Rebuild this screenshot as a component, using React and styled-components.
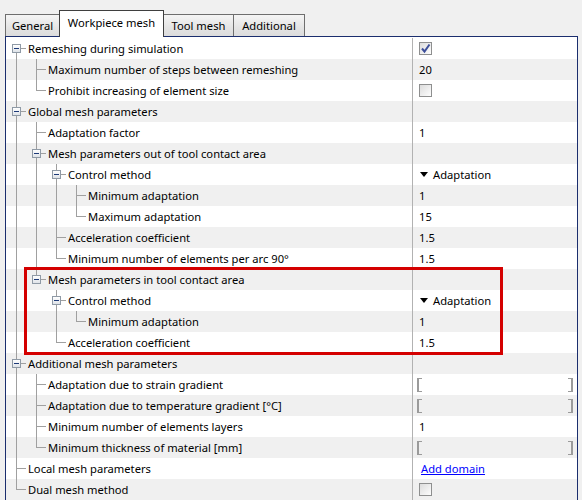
import React from "react";
import styled, { createGlobalStyle } from "styled-components";

const GlobalStyle = createGlobalStyle`
  html, body { margin: 0; padding: 0; background: #f0f0f0; }
  body {
    font-family: "Segoe UI", "Noto Sans", sans-serif;
    font-size: 11.2px;
    color: #000;
  }
`;

const LINE = "#a0a0a0";

const rows = [
  { l: 0, name: "Remeshing during simulation", exp: true, v: { t: "check", on: true } },
  { l: 1, name: "Maximum number of steps between remeshing", v: { t: "text", s: "20" } },
  { l: 1, name: "Prohibit increasing of element size", v: { t: "check" } },
  { l: 0, name: "Global mesh parameters", exp: true },
  { l: 1, name: "Adaptation factor", v: { t: "text", s: "1" } },
  { l: 1, name: "Mesh parameters out of tool contact area", exp: true },
  { l: 2, name: "Control method", exp: true, v: { t: "drop", s: "Adaptation" } },
  { l: 3, name: "Minimum adaptation", v: { t: "text", s: "1" } },
  { l: 3, name: "Maximum adaptation", v: { t: "text", s: "15" } },
  { l: 2, name: "Acceleration coefficient", v: { t: "text", s: "1.5" } },
  { l: 2, name: "Minimum number of elements per arc 90°", v: { t: "text", s: "1.5" } },
  { l: 1, name: "Mesh parameters in tool contact area", exp: true },
  { l: 2, name: "Control method", exp: true, v: { t: "drop", s: "Adaptation" } },
  { l: 3, name: "Minimum adaptation", v: { t: "text", s: "1" } },
  { l: 2, name: "Acceleration coefficient", v: { t: "text", s: "1.5" } },
  { l: 0, name: "Additional mesh parameters", exp: true },
  { l: 1, name: "Adaptation due to strain gradient", v: { t: "field" } },
  { l: 1, name: "Adaptation due to temperature gradient [°C]", v: { t: "field" } },
  { l: 1, name: "Minimum number of elements layers", v: { t: "text", s: "1" } },
  { l: 1, name: "Minimum thickness of material [mm]", v: { t: "field" } },
  { l: 0, name: "Local mesh parameters", v: { t: "link", s: "Add domain" } },
  { l: 0, name: "Dual mesh method", v: { t: "check" } },
];

// is there a later sibling at the same level (before the parent closes)?
const hasNext = (i) => {
  const l = rows[i].l;
  for (let j = i + 1; j < rows.length; j++) {
    if (rows[j].l < l) return false;
    if (rows[j].l === l) return true;
  }
  return false;
};

const guidesFor = (i) => {
  const row = rows[i];
  const out = [];
  for (let l = 0; l < row.l; l++) {
    let a = i - 1;
    while (rows[a].l !== l) a--;
    out.push(hasNext(a) ? ["through"] : []);
  }
  const own = ["horiz"];
  if (i > 0) own.push("up");
  if (hasNext(i)) own.push("down");
  out.push(own);
  return out;
};

const lineBg = {
  through: `linear-gradient(${LINE}, ${LINE}) 10px 0 / 1px 100% no-repeat`,
  up: `linear-gradient(${LINE}, ${LINE}) 10px 0 / 1px 11px no-repeat`,
  down: `linear-gradient(${LINE}, ${LINE}) 10px 10px / 1px 11px no-repeat`,
  horiz: `linear-gradient(${LINE}, ${LINE}) 10px 10px / 10px 1px no-repeat`,
};

const Page = styled.div`
  padding-top: 10px;
  width: 582px;
  height: 500px;
  overflow: hidden;
  box-sizing: border-box;
`;

const TabStrip = styled.div`
  display: flex;
  align-items: flex-end;
  height: 26px;
  padding-left: 5px;
`;

const Tab = styled.div`
  box-sizing: border-box;
  width: ${(p) => p.$w}px;
  height: ${(p) => (p.$active ? 27 : 22)}px;
  margin-left: ${(p) => (p.$first ? 0 : -1)}px;
  margin-bottom: ${(p) => (p.$active ? -1 : 0)}px;
  border: 1px solid ${(p) => (p.$active ? "#3f3f3f" : "#6e6e6e")};
  border-bottom: none;
  background: ${(p) =>
    p.$active ? "#fff" : "linear-gradient(#f5f5f5, #e4e4e4 60%, #dcdcdc)"};
  display: flex;
  align-items: center;
  justify-content: center;
  padding-bottom: ${(p) => (p.$active ? 3 : 0)}px;
  position: relative;
  z-index: ${(p) => (p.$active ? 2 : 1)};
  white-space: nowrap;
`;

const Panel = styled.div`
  margin: 0 4px 0 5px;
  border: 1px solid #1b2e6e;
  border-bottom: none;
  background: #fff;
  padding-top: 1px;
  position: relative;
`;

const Table = styled.div`
  position: relative;
`;

const Row = styled.div`
  display: grid;
  grid-template-columns: 407px 1fr;
  height: 21px;
  background: ${(p) => (p.$alt ? "#f0f0f0" : "#fff")};
`;

const NameCell = styled.div`
  display: flex;
  align-items: center;
  border-right: 1px solid #b2b2b2;
  overflow: hidden;
  white-space: nowrap;
`;

const Slot = styled.div`
  flex: none;
  width: 20px;
  height: 21px;
  display: flex;
  align-items: center;
  padding-left: 6px;
  box-sizing: border-box;
  background: ${(p) => p.$lines.map((k) => lineBg[k]).join(", ") || "none"};
`;

const Expander = styled.div`
  box-sizing: border-box;
  width: 9px;
  height: 9px;
  border: 1px solid #8f9aa6;
  background:
    linear-gradient(#1d3a78, #1d3a78) 1px 3px / 5px 1px no-repeat,
    linear-gradient(#ffffff, #dfe3e8);
`;

const Label = styled.span`
  padding-left: 2px;
`;

const ValueCell = styled.div`
  display: flex;
  align-items: center;
  padding-left: 6px;
  overflow: hidden;
  white-space: nowrap;
`;

const CheckBox = styled.div`
  box-sizing: border-box;
  width: 13px;
  height: 13px;
  border: 1px solid #8e8f8f;
  background: linear-gradient(135deg, #dcdcdc, #fdfdfd);
  display: flex;
  align-items: center;
  justify-content: center;
`;

const Drop = styled.span`
  display: flex;
  align-items: center;
  gap: 5px;
`;

const Arrow = styled.span`
  width: 0;
  height: 0;
  border-left: 4px solid transparent;
  border-right: 4px solid transparent;
  border-top: 5px solid #000;
  margin-left: 1px;
`;

const Field = styled.div`
  box-sizing: border-box;
  margin-left: -2px;
  width: 156px;
  height: 14px;
  border-left: 2px solid #9b9b9b;
  border-right: 2px solid #9b9b9b;
  background:
    linear-gradient(#9b9b9b, #9b9b9b) 0 0 / 3px 1px no-repeat,
    linear-gradient(#9b9b9b, #9b9b9b) 0 100% / 3px 1px no-repeat,
    linear-gradient(#9b9b9b, #9b9b9b) 100% 0 / 3px 1px no-repeat,
    linear-gradient(#9b9b9b, #9b9b9b) 100% 100% / 3px 1px no-repeat;
`;

const Link = styled.a`
  color: #0000ff;
  text-decoration: underline;
  margin-left: 2px;
  cursor: pointer;
`;

const Highlight = styled.div`
  position: absolute;
  left: 18px;
  top: 229px;
  width: 479px;
  height: 88px;
  border: 3px solid #d40000;
  box-sizing: border-box;
  pointer-events: none;
`;

const Check = () => (
  <svg width="11" height="11" viewBox="0 0 11 11">
    <path d="M2 5.5 L4.5 8.5 L9.5 1.5" fill="none" stroke="#3d4f9a" strokeWidth="2" />
  </svg>
);

const Value = ({ v }) => {
  if (!v) return null;
  if (v.t === "check") return <CheckBox>{v.on && <Check />}</CheckBox>;
  if (v.t === "drop")
    return (
      <Drop>
        <Arrow />
        {v.s}
      </Drop>
    );
  if (v.t === "field") return <Field />;
  if (v.t === "link") return <Link>{v.s}</Link>;
  return <span>{v.s}</span>;
};

const tabs = [
  { label: "General", w: 55 },
  { label: "Workpiece mesh", w: 105, active: true },
  { label: "Tool mesh", w: 71 },
  { label: "Additional", w: 72 },
];

export default function App() {
  return (
    <Page>
      <GlobalStyle />
      <TabStrip>
        {tabs.map((t, i) => (
          <Tab key={t.label} $w={t.w} $active={t.active} $first={i === 0}>
            {t.label}
          </Tab>
        ))}
      </TabStrip>
      <Panel>
        <Table>
          {rows.map((r, i) => {
            const guides = guidesFor(i);
            return (
              <Row key={i} $alt={i % 2 === 1}>
                <NameCell>
                  {guides.map((g, k) => (
                    <Slot key={k} $lines={g}>
                      {k === r.l && r.exp && <Expander />}
                    </Slot>
                  ))}
                  <Label>{r.name}</Label>
                </NameCell>
                <ValueCell>
                  <Value v={r.v} />
                </ValueCell>
              </Row>
            );
          })}
          <Highlight />
        </Table>
      </Panel>
    </Page>
  );
}
